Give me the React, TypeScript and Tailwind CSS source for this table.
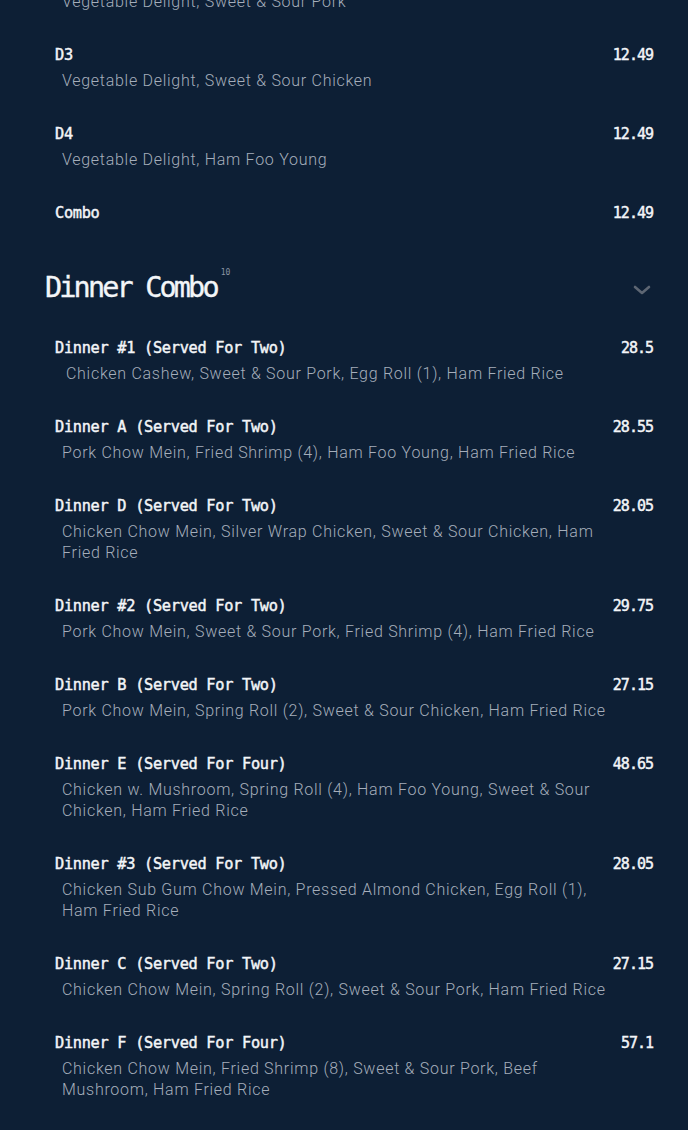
type Item = { name: string; price: string; desc?: string; indent?: string };

const mono = "font-['DejaVu_Sans_Mono',monospace]";

const lunch: Item[] = [
  { name: 'D2', price: '12.49', desc: 'Vegetable Delight, Sweet & Sour Pork' },
  { name: 'D3', price: '12.49', desc: 'Vegetable Delight, Sweet & Sour Chicken' },
  { name: 'D4', price: '12.49', desc: 'Vegetable Delight, Ham Foo Young' },
  { name: 'Combo', price: '12.49' },
];

const dinner: Item[] = [
  {
    name: 'Dinner #1 (Served For Two)',
    price: '28.5',
    desc: 'Chicken Cashew, Sweet & Sour Pork, Egg Roll (1), Ham Fried Rice',
    indent: 'pl-[11px]',
  },
  { name: 'Dinner A (Served For Two)', price: '28.55', desc: 'Pork Chow Mein, Fried Shrimp (4), Ham Foo Young, Ham Fried Rice' },
  {
    name: 'Dinner D (Served For Two)',
    price: '28.05',
    desc: 'Chicken Chow Mein, Silver Wrap Chicken, Sweet & Sour Chicken, Ham Fried Rice',
  },
  { name: 'Dinner #2 (Served For Two)', price: '29.75', desc: 'Pork Chow Mein, Sweet & Sour Pork, Fried Shrimp (4), Ham Fried Rice' },
  { name: 'Dinner B (Served For Two)', price: '27.15', desc: 'Pork Chow Mein, Spring Roll (2), Sweet & Sour Chicken, Ham Fried Rice' },
  {
    name: 'Dinner E (Served For Four)',
    price: '48.65',
    desc: 'Chicken w. Mushroom, Spring Roll (4), Ham Foo Young, Sweet & Sour Chicken, Ham Fried Rice',
  },
  {
    name: 'Dinner #3 (Served For Two)',
    price: '28.05',
    desc: 'Chicken Sub Gum Chow Mein, Pressed Almond Chicken, Egg Roll (1), Ham Fried Rice',
  },
  { name: 'Dinner C (Served For Two)', price: '27.15', desc: 'Chicken Chow Mein, Spring Roll (2), Sweet & Sour Pork, Ham Fried Rice' },
  {
    name: 'Dinner F (Served For Four)',
    price: '57.1',
    desc: 'Chicken Chow Mein, Fried Shrimp (8), Sweet & Sour Pork, Beef Mushroom, Ham Fried Rice',
  },
];

function MenuRow({ item }: { item: Item }) {
  return (
    <div className="flex items-start pl-[10px]">
      <div className="flex-1 min-w-0">
        <div
          className={`${mono} text-[15.3px] leading-[20px] tracking-[-0.02em] text-[#f3f5f8] [-webkit-text-stroke:0.45px_#f3f5f8]`}
        >
          {item.name}
        </div>
        {item.desc && (
          <p
            className={`mt-[5px] ${item.indent ?? 'pl-[7px]'} font-['Roboto',sans-serif] text-[16px] font-light leading-[21px] tracking-[0.045em] text-[#a5aebb]`}
          >
            {item.desc}
          </p>
        )}
      </div>
      <div
        className={`${mono} w-[44px] shrink-0 text-right text-[15px] leading-[20px] tracking-[-1px] text-[#f3f5f8] [-webkit-text-stroke:0.45px_#f3f5f8]`}
      >
        {item.price}
      </div>
    </div>
  );
}

export default function App() {
  return (
    <div className="min-h-[1130px] overflow-hidden bg-[#0d1f35]">
      <div className="-mt-[34px] pl-[45px] pr-[35px]">
        <div className="flex flex-col gap-[33px]">
          {lunch.map((it) => (
            <MenuRow key={it.name} item={it} />
          ))}
        </div>

        <div className="mt-[48px] flex items-center justify-between">
          <h2
            className={`${mono} flex items-start text-[28.5px] leading-[34px] tracking-[-0.1em] text-[#f3f5f8] [-webkit-text-stroke:0.35px_#f3f5f8]`}
          >
            Dinner Combo
            <sup className="ml-[4px] mt-[2px] text-[8px] leading-none tracking-normal text-[#8b95a3] [-webkit-text-stroke:0px]">
              10
            </sup>
          </h2>
          <svg width="20" height="12" viewBox="0 0 20 12" className="mr-[1px] mt-[4px]" fill="none">
            <polyline
              points="3,3 10,9 17,3"
              stroke="#5d6673"
              strokeWidth="2.6"
              strokeLinecap="round"
              strokeLinejoin="round"
            />
          </svg>
        </div>

        <div className="mt-[33px] flex flex-col gap-[33px] pb-[40px]">
          {dinner.map((it) => (
            <MenuRow key={it.name} item={it} />
          ))}
        </div>
      </div>
    </div>
  );
}
